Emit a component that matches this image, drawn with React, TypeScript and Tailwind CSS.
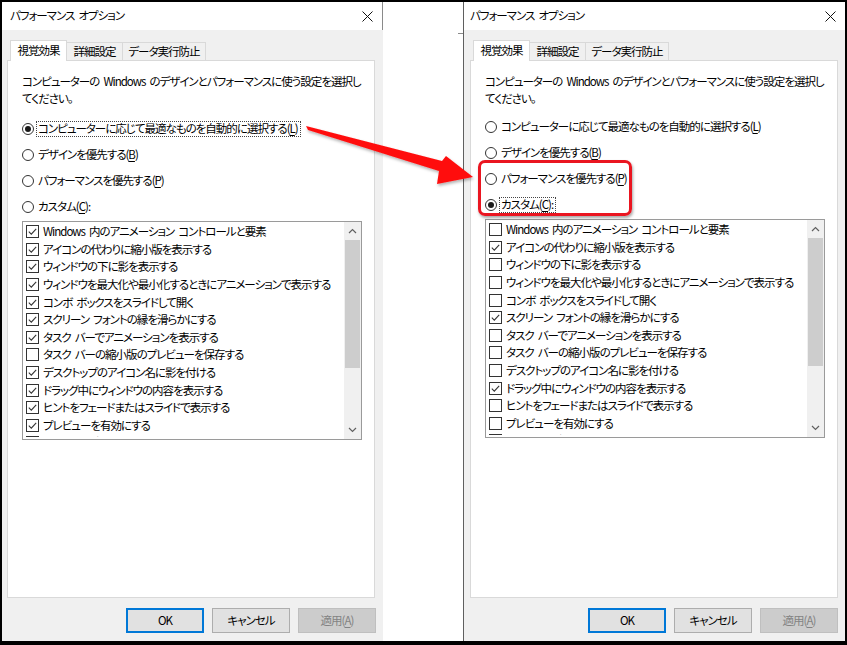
import React from "react";

const ITEMS = [
  "Windows 内のアニメーション コントロールと要素",
  "アイコンの代わりに縮小版を表示する",
  "ウィンドウの下に影を表示する",
  "ウィンドウを最大化や最小化するときにアニメーションで表示する",
  "コンボ ボックスをスライドして開く",
  "スクリーン フォントの縁を滑らかにする",
  "タスク バーでアニメーションを表示する",
  "タスク バーの縮小版のプレビューを保存する",
  "デスクトップのアイコン名に影を付ける",
  "ドラッグ中にウィンドウの内容を表示する",
  "ヒントをフェードまたはスライドで表示する",
  "プレビューを有効にする",
  "半透明の選択四角形を表示する",
];

const RADIOS: [string, string, string][] = [
  ["コンピューターに応じて最適なものを自動的に選択する(", "L", ")"],
  ["デザインを優先する(", "B", ")"],
  ["パフォーマンスを優先する(", "P", ")"],
  ["カスタム(", "C", "):"],
];

function Mnemonic({ parts }: { parts: [string, string, string] }) {
  return (
    <span className="whitespace-nowrap">
      {parts[0]}
      <span className="underline underline-offset-[2px] decoration-1">{parts[1]}</span>
      {parts[2]}
    </span>
  );
}

function RadioRow({
  parts,
  checked,
  focused,
}: {
  parts: [string, string, string];
  checked: boolean;
  focused: boolean;
}) {
  return (
    <div className="h-[26px] flex items-center">
      <span className="w-[12px] h-[12px] rounded-full border border-[#333333] bg-white flex items-center justify-center shrink-0">
        {checked && <span className="w-[6px] h-[6px] rounded-full bg-[#1a1a1a]" />}
      </span>
      <span
        className={
          focused
            ? "ml-[2px] h-[16px] pl-[1px] pr-[2px] flex items-center border border-dotted border-[#444444]"
            : "ml-[2px] h-[16px] pl-[1px] pr-[2px] flex items-center border border-transparent"
        }
      >
        <Mnemonic parts={parts} />
      </span>
    </div>
  );
}

function CheckRow({ label, checked }: { label: string; checked: boolean }) {
  return (
    <div className="h-[17.6px] flex items-center shrink-0 whitespace-nowrap">
      <span className="w-[13px] h-[13px] border border-[#333333] bg-white flex items-center justify-center shrink-0">
        {checked && (
          <svg width="11" height="11" viewBox="0 0 11 11">
            <path d="M1.8 5.6 L4.3 8.1 L9.2 2.9" stroke="#333333" strokeWidth="1.1" fill="none" />
          </svg>
        )}
      </span>
      <span className="ml-[4px]">{label}</span>
    </div>
  );
}

function Chevron({ up }: { up: boolean }) {
  return (
    <svg width="9" height="6" viewBox="0 0 9 6">
      <path
        d={up ? "M1 5 L4.5 1.5 L8 5" : "M1 1 L4.5 4.5 L8 1"}
        stroke="#606060"
        strokeWidth="1.2"
        fill="none"
      />
    </svg>
  );
}

function CloseGlyph() {
  return (
    <svg width="11" height="11" viewBox="0 0 11 11">
      <path d="M0.5 0.5 L10.5 10.5 M10.5 0.5 L0.5 10.5" stroke="#111111" strokeWidth="1" />
    </svg>
  );
}

function Dialog({
  selected,
  focus,
  checks,
  highlight,
  side,
}: {
  selected: number;
  focus: number;
  checks: boolean[];
  highlight: boolean;
  side: "left" | "right";
}) {
  const isLeft = side === "left";
  return (
    <div
      className={
        isLeft
          ? "w-[381px] h-full flex flex-col bg-[#f0f0f0]"
          : "w-[382px] h-full flex flex-col bg-[#f0f0f0] border-l border-[#5f5f5f]"
      }
    >
      {/* title bar */}
      <div
        className={
          isLeft
            ? "h-[28px] bg-white border-r border-[#8a8a8a] flex items-center justify-between pl-[8px] pr-[9px]"
            : "h-[28px] bg-white flex items-center justify-between pl-[6px] pr-[9px]"
        }
      >
        <span>パフォーマンス オプション</span>
        <CloseGlyph />
      </div>

      {/* body */}
      <div className={isLeft ? "flex-1 flex flex-col pl-[5px] pr-[7px] pt-[10px]" : "flex-1 flex flex-col pl-[6px] pr-[7px] pt-[10px]"}>
        {/* tabs */}
        <div className="h-[20px] flex items-end pl-[3px] relative z-10">
          <div className="w-[57px] h-[21px] -mb-[1px] bg-white border border-b-0 border-[#d9d9d9] flex items-center justify-center pb-[1px]">
            視覚効果
          </div>
          <div className="w-[56px] h-[18px] bg-[#f0f0f0] border border-l-0 border-b-0 border-[#d9d9d9] flex items-center justify-center">
            詳細設定
          </div>
          <div className="w-[83px] h-[18px] bg-[#f0f0f0] border border-l-0 border-b-0 border-[#d9d9d9] flex items-center justify-center">
            データ実行防止
          </div>
        </div>

        {/* tab panel */}
        <div className="w-[368px] h-[538px] bg-white border border-[#d9d9d9] pt-[12px] pl-[14px] flex flex-col">
          <p className="leading-[17px] whitespace-nowrap">
            コンピューターの Windows のデザインとパフォーマンスに使う設定を選択し
            <br />
            てください。
          </p>

          <div className={isLeft ? "mt-[9px] relative" : "mt-[7px] relative"}>
            {RADIOS.map((r, i) => (
              <RadioRow key={i} parts={r} checked={i === selected} focused={i === focus} />
            ))}
            {highlight && (
              <div className="absolute left-[-7px] top-[46px] w-[154px] h-[56px] rounded-[7px] border-[3px] border-[#ea1520] shadow-[1px_2px_3px_rgba(0,0,0,0.35)] pointer-events-none" />
            )}
          </div>

          {/* visual effects list */}
          <div className="mt-[1px] w-[340px] h-[219px] border border-[#9a9a9a] flex overflow-hidden">
            <div className="flex-1 h-[215px] flex flex-col pl-[3px] pt-[1px] overflow-hidden">
              {ITEMS.map((label, i) => (
                <CheckRow key={i} label={label} checked={checks[i]} />
              ))}
            </div>
            <div className="w-[17px] h-full bg-[#f0f0f0] flex flex-col items-center">
              <div className="h-[18px] w-full flex items-center justify-center">
                <Chevron up />
              </div>
              <div className="w-[15px] h-[128px] bg-[#cdcdcd]" />
              <div className="flex-1" />
              <div className="h-[18px] w-full flex items-center justify-center">
                <Chevron up={false} />
              </div>
            </div>
          </div>
        </div>

        {/* buttons */}
        <div className="mt-[10px] flex justify-end gap-[8px]">
          <div className="w-[78px] h-[25px] bg-[#e1e1e1] border-2 border-[#0078d7] flex items-center justify-center">
            OK
          </div>
          <div className="w-[78px] h-[25px] bg-[#e1e1e1] border border-[#adadad] flex items-center justify-center">
            キャンセル
          </div>
          <div className="w-[78px] h-[25px] bg-[#cccccc] border border-[#bfbfbf] flex items-center justify-center text-[#838383]">
            <span>
              適用(<span className="underline underline-offset-[2px] decoration-1">A</span>)
            </span>
          </div>
        </div>
      </div>
    </div>
  );
}

export default function App() {
  const leftChecks = ITEMS.map((_, i) => i !== 7);
  const rightChecks = ITEMS.map((_, i) => i === 1 || i === 5 || i === 9);
  return (
    <div className="relative w-[847px] h-[645px] bg-black flex pl-[2px] pr-[2px] pt-[2px] pb-[4px] text-[11.5px] text-black font-['Noto_Sans_CJK_JP','Noto_Sans',sans-serif] [font-feature-settings:'palt'] tracking-[-1px] [word-spacing:2.5px]">
      <Dialog side="left" selected={0} focus={0} checks={leftChecks} highlight={false} />

      {/* desktop gap between the two windows */}
      <div className="w-[80px] h-full bg-white flex flex-col items-end">
        <div className="mt-[31px] w-[5px] h-[1px] bg-[#8a8a8a]" />
      </div>

      <Dialog side="right" selected={3} focus={3} checks={rightChecks} highlight />

      {/* callout arrow drawn across both windows */}
      <svg
        className="absolute left-0 top-0 pointer-events-none"
        width="847"
        height="645"
        viewBox="0 0 847 645"
      >
        <defs>
          <filter id="arrowShadow" x="-10%" y="-10%" width="120%" height="130%">
            <feDropShadow dx="1" dy="2" stdDeviation="1.5" floodColor="#000" floodOpacity="0.3" />
          </filter>
        </defs>
        <polygon
          points="306,126 442,161 446,156 473,177 437,184 439,171 308,130"
          fill="#ff0d0d"
          filter="url(#arrowShadow)"
        />
      </svg>
    </div>
  );
}
